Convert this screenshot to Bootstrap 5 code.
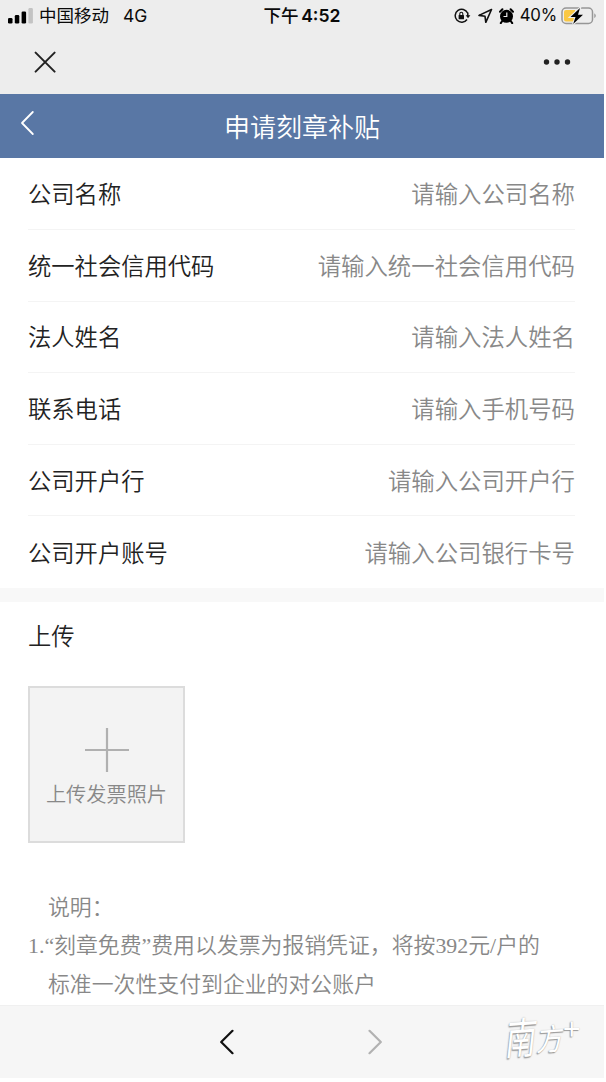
<!DOCTYPE html>
<html lang="zh-CN">
<head>
<meta charset="utf-8">
<meta name="viewport" content="width=device-width, initial-scale=1">
<title>申请刻章补贴</title>
<link rel="stylesheet" href="https://cdn.jsdelivr.net/npm/bootstrap@5.3.0/dist/css/bootstrap.min.css">
<style>
body{font-family:"Liberation Sans","Noto Sans CJK SC",sans-serif;background:#fff;overflow:hidden}
svg{display:block;flex:none}
.phone{width:604px;height:1078px}
.top-area{background:#ededed;height:94px;color:#0a0a0a}
.status-bar{height:31px;font:400 17.5px/31px Inter,"Noto Sans CJK SC",sans-serif;padding:0 8px 0 8px}
.status-bar .side{flex:1 1 0}
.percent{font-size:16.8px;letter-spacing:-.2px}
.clock{font-weight:500;font-size:17.5px;white-space:nowrap}
.clock b{font-weight:600;font-size:17.6px;margin-left:-2px}
.web-bar{height:61px;padding:0 33px 0 34px}
.title-bar{background:#5977a5;height:64.4px;color:#fff}
.title-bar h1{font-size:26px;font-weight:350;line-height:64px;padding-top:2px}
.title-back{left:20px;top:16px}
.form-rows{padding:0 29px 0 28px}
.form-row{height:71.65px;border-bottom:1px solid #f4f4f4;font-size:23.3px;padding-top:4px;color:#222}
.form-row:last-child{border-bottom:0}
.form-row label{font-weight:350;white-space:nowrap}
.form-row input{font-weight:350;font-size:23.4px;outline:0;min-width:0}
.form-row input::placeholder{color:#888;opacity:1}
.separator{height:14px;background:#f8f8f8}
.upload-area{padding:0 28px;height:403px}
.upload-area h2{font-size:23.3px;font-weight:350;line-height:36px;color:#222;margin:17px 0 31px}
.upload-box{width:157px;height:157px;border:2px solid #dcdcdc;background:#f3f3f3;color:#888;font-size:20.2px;font-weight:350;line-height:30px;padding-top:40px}
.upload-box svg{margin-bottom:8px}
.notes{margin-top:46px;font:350 21.87px/38.2px "Liberation Serif","Noto Sans CJK SC",sans-serif;color:#888;white-space:nowrap}
.notes p{margin:0;padding-left:20px}
.notes .item-one{text-indent:-20px}
.foot-bar{height:73px;background:#f6f6f6;border-top:1px solid #f0f0f0}
.foot-bar .inner{padding-left:218px;gap:132px}
.brand-mark{left:503px;top:4px;color:#fff;font:italic 400 31px/52px "Noto Sans CJK SC",sans-serif;text-shadow:-1px 1px 1px #999,0 0 1px #aaa}
.brand-mark span{display:inline-block}
.brand-mark .first{transform:rotate(-4deg) scaleY(1.38)}
.brand-mark .second{transform:rotate(-4deg) scaleY(1.12);font-size:27px;margin-left:1px}
.brand-mark .plus-sign{font:300 33px/20px Inter,sans-serif;position:absolute;left:58px;top:6px}
</style>
</head>
<body>
<div class="phone d-flex flex-column">
  <header class="top-area">
    <div class="status-bar d-flex align-items-center">
      <div class="side d-flex align-items-center">
        <svg width="25" height="16" viewBox="0 0 25 16"><g fill="#000"><rect x="0" y="10" width="4.5" height="5.5" rx="1.3"/><rect x="6.8" y="7" width="4.5" height="8.5" rx="1.3"/><rect x="13.6" y="3.5" width="4.5" height="12" rx="1.3"/></g><rect x="20.4" y="0" width="4.5" height="15.5" rx="1.3" fill="#c3c3c3"/></svg>
        <span style="margin-left:6px">中国移动</span><span style="margin-left:14px">4G</span>
      </div>
      <div class="clock">下午 <b>4:52</b></div>
      <div class="side d-flex align-items-center justify-content-end">
        <svg width="17" height="16" viewBox="0 0 17 16" fill="none" stroke="#111" stroke-width="1.5"><path d="M13.6 5A6.5 6.5 0 1 0 13 11.5M13.8 4.5v4"/><path d="M11.7 7.2h4.7L14 10.3z" fill="#111" stroke="none"/><rect x="4.6" y="7" width="5.4" height="4.2" rx=".5" fill="#111" stroke="none"/><path d="M5.8 7V5.8a1.5 1.5 0 0 1 3 0V7" stroke-width="1.1"/></svg>
        <svg style="margin-left:7px" width="15" height="16" viewBox="0 0 15 16" fill="none" stroke="#111" stroke-width="1.6" stroke-linejoin="round"><path d="M13.5 1.5 1 7.4l6 .9.8 6z"/></svg>
        <svg style="margin-left:6px" width="15" height="16" viewBox="0 0 15 16"><circle cx="7.5" cy="8.3" r="6.5" fill="#000"/><path d="M1 3.8 3.4 1.3M14 3.8l-2.4-2.5M3.4 12.8l-1.6 2.3M11.6 12.8l1.6 2.3" stroke="#000" stroke-width="2" stroke-linecap="round"/><path d="M7.8 4.5v4H4.5" fill="none" stroke="#ededed" stroke-width="1.2"/></svg>
        <span class="percent" style="margin-left:6px">40%</span>
        <svg style="margin-left:4px;margin-right:-1px" width="36" height="18" viewBox="0 0 36 18"><rect x="1" y="1" width="30.5" height="15.5" rx="4" fill="none" stroke="#969696" stroke-width="1.5"/><path d="M5 3h9v11.5H5a2 2 0 0 1-2-2V5a2 2 0 0 1 2-2z" fill="#fac844"/><path d="M33.3 6.2q3 2.5 0 5z" fill="#969696"/><path d="M19 1 9.5 10h5l-2.3 7L22 7.8h-5z" fill="#000" stroke="#ededed" stroke-width="2.2" paint-order="stroke"/></svg>
      </div>
    </div>
    <div class="web-bar d-flex align-items-center justify-content-between">
      <svg width="22" height="22" viewBox="0 0 22 22" stroke="#222" stroke-width="2" stroke-linecap="round"><path d="m1.6 1.6 19 19M20.6 1.6l-19 19"/></svg>
      <svg width="28" height="6" viewBox="0 0 28 6" fill="#222"><circle cx="3.5" cy="3" r="2.7"/><circle cx="14" cy="3" r="2.7"/><circle cx="24.5" cy="3" r="2.7"/></svg>
    </div>
  </header>

  <nav class="title-bar position-relative text-center">
    <svg class="title-back position-absolute" width="15" height="26" viewBox="0 0 15 26" fill="none" stroke="#fff" stroke-width="1.8" stroke-linecap="round" stroke-linejoin="round"><path d="M12.8 2 2 13l10.8 11"/></svg>
    <h1 class="m-0">申请刻章补贴</h1>
  </nav>

  <main class="flex-grow-1">
    <form class="form-rows">
      <div class="form-row d-flex align-items-center"><label for="f1">公司名称</label><input id="f1" class="flex-grow-1 border-0 bg-transparent p-0 text-end" placeholder="请输入公司名称"></div>
      <div class="form-row d-flex align-items-center"><label for="f2">统一社会信用代码</label><input id="f2" class="flex-grow-1 border-0 bg-transparent p-0 text-end" placeholder="请输入统一社会信用代码"></div>
      <div class="form-row d-flex align-items-center"><label for="f3">法人姓名</label><input id="f3" class="flex-grow-1 border-0 bg-transparent p-0 text-end" placeholder="请输入法人姓名"></div>
      <div class="form-row d-flex align-items-center"><label for="f4">联系电话</label><input id="f4" class="flex-grow-1 border-0 bg-transparent p-0 text-end" placeholder="请输入手机号码"></div>
      <div class="form-row d-flex align-items-center"><label for="f5">公司开户行</label><input id="f5" class="flex-grow-1 border-0 bg-transparent p-0 text-end" placeholder="请输入公司开户行"></div>
      <div class="form-row d-flex align-items-center"><label for="f6">公司开户账号</label><input id="f6" class="flex-grow-1 border-0 bg-transparent p-0 text-end" placeholder="请输入公司银行卡号"></div>
    </form>
    <div class="separator"></div>
    <section class="upload-area overflow-hidden">
      <h2>上传</h2>
      <div class="upload-box d-flex flex-column align-items-center">
        <svg width="44" height="44" viewBox="0 0 44 44" stroke="#b0b0b0" stroke-width="2.2"><path d="M22 0v44M0 22h44"/></svg>
        <span>上传发票照片</span>
      </div>
      <div class="notes">
        <p>说明：</p>
        <p class="item-one">1.“刻章免费”费用以发票为报销凭证，将按392元/户的</p>
        <p>标准一次性支付到企业的对公账户</p>
      </div>
    </section>
  </main>

  <footer class="foot-bar position-relative">
    <div class="inner d-flex align-items-center h-100">
      <svg width="16" height="26" viewBox="0 0 16 26" fill="none" stroke="#111" stroke-width="2.2" stroke-linecap="round" stroke-linejoin="round"><path d="M14.5 1.8 3.2 13l11.3 11.2"/></svg>
      <svg width="16" height="26" viewBox="0 0 16 26" fill="none" stroke="#b2b2b2" stroke-width="2.2" stroke-linecap="round" stroke-linejoin="round"><path d="M3.5 1.8 14.8 13 3.5 24.2"/></svg>
    </div>
    <div class="brand-mark position-absolute text-nowrap"><span class="first">南</span><span class="second">方</span><span class="plus-sign">+</span></div>
  </footer>
</div>
<script src="https://cdn.jsdelivr.net/npm/bootstrap@5.3.0/dist/js/bootstrap.bundle.min.js"></script>
</body>
</html>
